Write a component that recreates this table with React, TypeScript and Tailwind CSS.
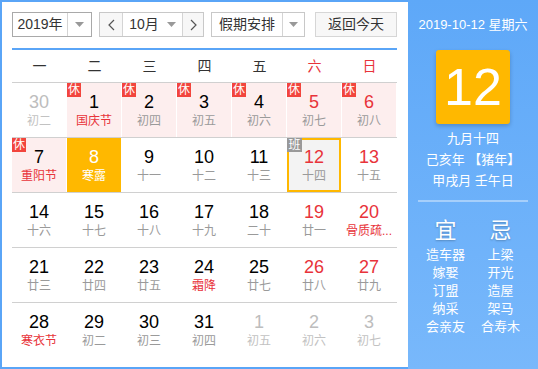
import React from "react";

type Cell = {
  d: number;
  l: string;
  other?: boolean;
  fest?: boolean;
  rest?: boolean;
  red?: boolean;
  today?: boolean;
  sel?: boolean;
  work?: boolean;
};

const rows: Cell[][] = [
  [
    { d: 30, l: "初二", other: true },
    { d: 1, l: "国庆节", fest: true, rest: true },
    { d: 2, l: "初四", rest: true },
    { d: 3, l: "初五", rest: true },
    { d: 4, l: "初六", rest: true },
    { d: 5, l: "初七", rest: true, red: true },
    { d: 6, l: "初八", rest: true, red: true },
  ],
  [
    { d: 7, l: "重阳节", fest: true, rest: true },
    { d: 8, l: "寒露", today: true },
    { d: 9, l: "十一" },
    { d: 10, l: "十二" },
    { d: 11, l: "十三" },
    { d: 12, l: "十四", sel: true, work: true, red: true },
    { d: 13, l: "十五", red: true },
  ],
  [
    { d: 14, l: "十六" },
    { d: 15, l: "十七" },
    { d: 16, l: "十八" },
    { d: 17, l: "十九" },
    { d: 18, l: "二十" },
    { d: 19, l: "廿一", red: true },
    { d: 20, l: "骨质疏...", fest: true, red: true },
  ],
  [
    { d: 21, l: "廿三" },
    { d: 22, l: "廿四" },
    { d: 23, l: "廿五" },
    { d: 24, l: "霜降", fest: true },
    { d: 25, l: "廿七" },
    { d: 26, l: "廿八", red: true },
    { d: 27, l: "廿九", red: true },
  ],
  [
    { d: 28, l: "寒衣节", fest: true },
    { d: 29, l: "初二" },
    { d: 30, l: "初三" },
    { d: 31, l: "初四" },
    { d: 1, l: "初五", other: true },
    { d: 2, l: "初六", other: true },
    { d: 3, l: "初七", other: true },
  ],
];

const weekdays = ["一", "二", "三", "四", "五", "六", "日"];

function Caret() {
  return (
    <svg width="9" height="5" viewBox="0 0 9 5">
      <path d="M0 0 L9 0 L4.5 5 Z" fill="#999" />
    </svg>
  );
}

function DayCell({ c }: { c: Cell }) {
  let bg = "";
  if (c.today) bg = "bg-[#ffb800]";
  else if (c.sel) bg = "bg-[#f3f3f3] border-2 border-[#ffb800]";
  else if (c.rest) bg = "bg-[#fdeeee]";

  let numColor = "text-black";
  if (c.other) numColor = "text-[#bdbdbd]";
  else if (c.today) numColor = "text-white";
  else if (c.red) numColor = "text-[#e8333a]";

  let lunColor = "text-[#9a9a9a]";
  if (c.other) lunColor = "text-[#c2c2c2]";
  else if (c.today) lunColor = "text-white";
  else if (c.fest) lunColor = "text-[#e8333a]";

  return (
    <div className="relative h-[54px] w-[55px] pr-px">
      <div className={`flex h-full w-full flex-col items-center justify-center ${bg}`}>
        <div className={`text-[18px] leading-[22px] ${numColor}`}>{c.d}</div>
        <div className={`whitespace-nowrap text-[12px] leading-[16px] ${lunColor}`}>{c.l}</div>
      </div>
      {c.rest && (
        <div className="absolute left-0 top-0 flex h-[14px] w-[14px] items-center justify-center bg-[#f2453d] text-[12px] leading-none text-white">
          休
        </div>
      )}
      {c.work && (
        <div className="absolute left-0 top-0 flex h-[14px] w-[15px] items-center justify-center bg-[#999999] text-[12px] leading-none text-white">
          班
        </div>
      )}
    </div>
  );
}

export default function App() {
  const yi = ["造车器", "嫁娶", "订盟", "纳采", "会亲友"];
  const ji = ["上梁", "开光", "造屋", "架马", "合寿木"];
  return (
    <div className="flex h-[369px] w-[538px] font-['Liberation_Sans','Noto_Sans_CJK_SC',sans-serif]">
      <div className="h-[369px] w-[408px] border-b-2 border-l-2 border-t-2 border-[#5aa5f7] bg-white pb-[10px] pl-[10px] pr-[11px] pt-[10px]">
        {/* controls */}
        <div className="flex h-[25px] text-[14px] text-[#333]">
          <div className="flex h-full w-[80px] border border-[#a9a9a9]">
            <div className="flex w-[55px] items-center justify-center border-r border-[#d4d4d4]">2019年</div>
            <div className="flex flex-1 items-center justify-center">
              <Caret />
            </div>
          </div>
          <div className="ml-[7px] flex h-full w-[105px] border border-[#c8c8c8]">
            <div className="flex w-[23px] items-center justify-center border-r border-[#d4d4d4] bg-[#f7f7f7]">
              <svg width="7" height="12" viewBox="0 0 7 12">
                <path d="M6 1 L1 6 L6 11" stroke="#555" strokeWidth="1.2" fill="none" />
              </svg>
            </div>
            <div className="flex w-[60px] items-center justify-center gap-[8px] border-r border-[#d4d4d4]">
              <span>10月</span>
              <Caret />
            </div>
            <div className="flex flex-1 items-center justify-center bg-[#f7f7f7]">
              <svg width="7" height="12" viewBox="0 0 7 12">
                <path d="M1 1 L6 6 L1 11" stroke="#555" strokeWidth="1.2" fill="none" />
              </svg>
            </div>
          </div>
          <div className="ml-[7px] flex h-full w-[94px] border border-[#c8c8c8]">
            <div className="flex w-[71px] items-center justify-center border-r border-[#d4d4d4]">假期安排</div>
            <div className="flex flex-1 items-center justify-center">
              <Caret />
            </div>
          </div>
          <div className="ml-[10px] flex h-full flex-1 items-center justify-center border border-[#d6d6d6] bg-[#f7f7f7]">
            返回今天
          </div>
        </div>
        {/* blue line */}
        <div className="mt-[11px] h-[2px] bg-[#5aa5f7]" />
        {/* weekday header */}
        <div className="flex h-[32px] text-[14px]">
          {weekdays.map((w, i) => (
            <div
              key={w}
              className={`flex w-[55px] items-center justify-center ${i >= 5 ? "text-[#e8333a]" : "text-[#333]"}`}
            >
              {w}
            </div>
          ))}
        </div>
        {rows.map((r, ri) => (
          <div key={ri} className="flex border-t border-[#d0d0d0]">
            {r.map((c, ci) => (
              <DayCell key={ci} c={c} />
            ))}
          </div>
        ))}
      </div>
      <div className="flex h-[369px] w-[130px] flex-col items-center bg-gradient-to-b from-[#5ea8f8] to-[#78b8fb] px-[10px] text-white">
        <div className="mt-[15px] text-[13px] leading-[20px]">2019-10-12 星期六</div>
        <div className="mt-[15px] flex h-[74px] w-[74px] items-center justify-center rounded-[3px] bg-[#ffb800] text-[52px] leading-none shadow-[0_2px_4px_rgba(0,0,0,0.2)]">
          12
        </div>
        <div className="mt-[4px] flex flex-col items-center text-[13px] leading-[21px]">
          <div>九月十四</div>
          <div>己亥年 【猪年】</div>
          <div>甲戌月 壬午日</div>
        </div>
        <div className="mt-[9px] h-[2px] w-full bg-[#a6cffb]" />
        <div className="mt-[15px] flex w-[110px]">
          <div className="flex w-[55px] flex-col items-center">
            <div className="text-[22px] leading-[28px] [text-shadow:0_1px_2px_rgba(0,0,0,0.25)]">宜</div>
            <div className="mt-px flex flex-col items-center text-[13px] leading-[18px]">
              {yi.map((t) => (
                <div key={t}>{t}</div>
              ))}
            </div>
          </div>
          <div className="flex w-[55px] flex-col items-center">
            <div className="text-[22px] leading-[28px] [text-shadow:0_1px_2px_rgba(0,0,0,0.25)]">忌</div>
            <div className="mt-px flex flex-col items-center text-[13px] leading-[18px]">
              {ji.map((t) => (
                <div key={t}>{t}</div>
              ))}
            </div>
          </div>
        </div>
      </div>
    </div>
  );
}
